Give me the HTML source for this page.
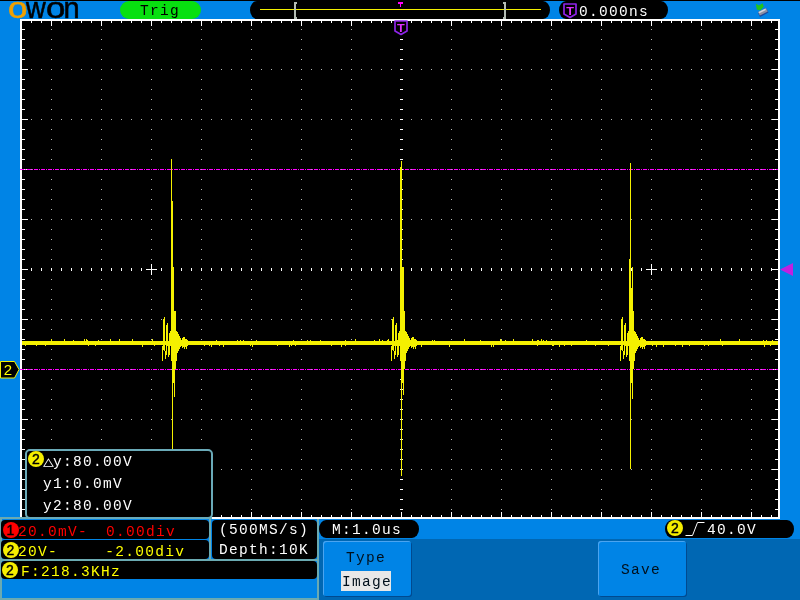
<!DOCTYPE html>
<html><head><meta charset="utf-8"><title>OWON Oscilloscope</title>
<style>
html,body{margin:0;padding:0}
body{width:800px;height:600px;overflow:hidden;position:relative;background:#0084e6;font-family:"Liberation Mono",monospace;font-size:14.5px;letter-spacing:1.30px;line-height:20px;color:#fff}
.a{position:absolute;white-space:pre}
svg{position:absolute;left:0;top:0}
.pill{position:absolute;background:#000;border-radius:7px/9px}
.blk{position:absolute;background:#000;border-radius:4px}
.ch{position:absolute;width:16px;height:16px;border-radius:50%;font-family:"Liberation Sans",sans-serif;font-size:14px;-webkit-text-stroke:0.4px #000;line-height:16px;text-align:center;color:#000;letter-spacing:0}
.btn{position:absolute;background:#0084e6;border-radius:3px;box-shadow:inset 1px 1px 0 #4aa4f0, 1px 1px 0 #004a90;color:#00101c}
.lg{display:inline-block;transform-origin:0 0;text-align:left}
.ln{position:absolute;background:#6aaab2}
</style></head><body>
<div id="scr" style="position:absolute;left:0;top:0;width:800px;height:600px;will-change:transform">
<div class="a" style="left:0;top:0;width:800px;height:1px;background:#000"></div>
<div class="a" id="logo" style="left:0;top:-8px;width:120px;height:30px;font-family:'Liberation Sans',sans-serif;font-size:29px;line-height:normal;letter-spacing:0;color:#000;-webkit-text-stroke:0.55px #000"><span class="lg" style="margin-left:7.7px;width:18.8px;transform:scaleX(1.21);color:#f0a000;-webkit-text-stroke:0.55px #f0a000">o</span><span class="lg" style="width:19.8px;transform:scaleX(0.94)">w</span><span class="lg" style="width:17.2px;transform:scaleX(1.2)">o</span><span class="lg" style="width:17px">n</span></div>
<div class="a" style="left:120px;top:1px;width:81px;height:18px;border-radius:9px;background:#08e010"></div>
<div class="a" style="left:140px;top:1px;color:#000">Trig</div>
<div class="pill" style="left:250px;top:1px;width:300px;height:18px"></div>
<div class="pill" style="left:559px;top:1px;width:109px;height:18px"></div>
<div class="a" style="left:579px;top:2px">0.000ns</div>
<div class="ln" style="left:0;top:517px;width:319px;height:2px"></div>
<div class="ln" style="left:0;top:559px;width:319px;height:2px"></div>
<div class="ln" style="left:0;top:598px;width:319px;height:2px"></div>
<div class="ln" style="left:209px;top:518px;width:2px;height:42px"></div>
<div class="ln" style="left:317px;top:518px;width:2px;height:81px"></div>
<div class="ln" style="left:0;top:518px;width:2px;height:81px"></div>
<svg width="800" height="600" viewBox="0 0 800 600" shape-rendering="crispEdges">
<rect x="20" y="19" width="760" height="500" fill="#fff" />
<rect x="22" y="21" width="756" height="496" fill="#000" />
<path d="M31 21v2M31 515v2M41 21v2M41 515v2M51 21v5M51 512v5M61 21v2M61 515v2M71 21v2M71 515v2M81 21v2M81 515v2M91 21v2M91 515v2M101 21v5M101 512v5M111 21v2M111 515v2M121 21v2M121 515v2M131 21v2M131 515v2M141 21v2M141 515v2M151 21v5M151 512v5M161 21v2M161 515v2M171 21v2M171 515v2M181 21v2M181 515v2M191 21v2M191 515v2M201 21v5M201 512v5M211 21v2M211 515v2M221 21v2M221 515v2M231 21v2M231 515v2M241 21v2M241 515v2M251 21v5M251 512v5M261 21v2M261 515v2M271 21v2M271 515v2M281 21v2M281 515v2M291 21v2M291 515v2M301 21v5M301 512v5M311 21v2M311 515v2M321 21v2M321 515v2M331 21v2M331 515v2M341 21v2M341 515v2M351 21v5M351 512v5M361 21v2M361 515v2M371 21v2M371 515v2M381 21v2M381 515v2M391 21v2M391 515v2M401 21v5M401 512v5M411 21v2M411 515v2M421 21v2M421 515v2M431 21v2M431 515v2M441 21v2M441 515v2M451 21v5M451 512v5M461 21v2M461 515v2M471 21v2M471 515v2M481 21v2M481 515v2M491 21v2M491 515v2M501 21v5M501 512v5M511 21v2M511 515v2M521 21v2M521 515v2M531 21v2M531 515v2M541 21v2M541 515v2M551 21v5M551 512v5M561 21v2M561 515v2M571 21v2M571 515v2M581 21v2M581 515v2M591 21v2M591 515v2M601 21v5M601 512v5M611 21v2M611 515v2M621 21v2M621 515v2M631 21v2M631 515v2M641 21v2M641 515v2M651 21v5M651 512v5M661 21v2M661 515v2M671 21v2M671 515v2M681 21v2M681 515v2M691 21v2M691 515v2M701 21v5M701 512v5M711 21v2M711 515v2M721 21v2M721 515v2M731 21v2M731 515v2M741 21v2M741 515v2M751 21v5M751 512v5M761 21v2M761 515v2M771 21v2M771 515v2" stroke="#fff" stroke-width="1" transform="translate(0.5,0)" fill="none"/>
<path d="M22 29h3M775 29h3M22 39h3M775 39h3M22 49h3M775 49h3M22 59h3M775 59h3M22 69h6M772 69h6M22 79h3M775 79h3M22 89h3M775 89h3M22 99h3M775 99h3M22 109h3M775 109h3M22 119h6M772 119h6M22 129h3M775 129h3M22 139h3M775 139h3M22 149h3M775 149h3M22 159h3M775 159h3M22 169h6M772 169h6M22 179h3M775 179h3M22 189h3M775 189h3M22 199h3M775 199h3M22 209h3M775 209h3M22 219h6M772 219h6M22 229h3M775 229h3M22 239h3M775 239h3M22 249h3M775 249h3M22 259h3M775 259h3M22 269h6M772 269h6M22 279h3M775 279h3M22 289h3M775 289h3M22 299h3M775 299h3M22 309h3M775 309h3M22 319h6M772 319h6M22 329h3M775 329h3M22 339h3M775 339h3M22 349h3M775 349h3M22 359h3M775 359h3M22 369h6M772 369h6M22 379h3M775 379h3M22 389h3M775 389h3M22 399h3M775 399h3M22 409h3M775 409h3M22 419h6M772 419h6M22 429h3M775 429h3M22 439h3M775 439h3M22 449h3M775 449h3M22 459h3M775 459h3M22 469h6M772 469h6M22 479h3M775 479h3M22 489h3M775 489h3M22 499h3M775 499h3M22 509h3M775 509h3" stroke="#fff" stroke-width="1" transform="translate(0,0.5)" fill="none"/>
<path d="M51 29h1M51 39h1M51 49h1M51 59h1M51 69h1M51 79h1M51 89h1M51 99h1M51 109h1M51 119h1M51 129h1M51 139h1M51 149h1M51 159h1M51 169h1M51 179h1M51 189h1M51 199h1M51 209h1M51 219h1M51 229h1M51 239h1M51 249h1M51 259h1M51 269h1M51 279h1M51 289h1M51 299h1M51 309h1M51 319h1M51 329h1M51 339h1M51 349h1M51 359h1M51 369h1M51 379h1M51 389h1M51 399h1M51 409h1M51 419h1M51 429h1M51 439h1M51 449h1M51 459h1M51 469h1M51 479h1M51 489h1M51 499h1M51 509h1M101 29h1M101 39h1M101 49h1M101 59h1M101 69h1M101 79h1M101 89h1M101 99h1M101 109h1M101 119h1M101 129h1M101 139h1M101 149h1M101 159h1M101 169h1M101 179h1M101 189h1M101 199h1M101 209h1M101 219h1M101 229h1M101 239h1M101 249h1M101 259h1M101 269h1M101 279h1M101 289h1M101 299h1M101 309h1M101 319h1M101 329h1M101 339h1M101 349h1M101 359h1M101 369h1M101 379h1M101 389h1M101 399h1M101 409h1M101 419h1M101 429h1M101 439h1M101 449h1M101 459h1M101 469h1M101 479h1M101 489h1M101 499h1M101 509h1M151 29h1M151 39h1M151 49h1M151 59h1M151 69h1M151 79h1M151 89h1M151 99h1M151 109h1M151 119h1M151 129h1M151 139h1M151 149h1M151 159h1M151 169h1M151 179h1M151 189h1M151 199h1M151 209h1M151 219h1M151 229h1M151 239h1M151 249h1M151 259h1M151 269h1M151 279h1M151 289h1M151 299h1M151 309h1M151 319h1M151 329h1M151 339h1M151 349h1M151 359h1M151 369h1M151 379h1M151 389h1M151 399h1M151 409h1M151 419h1M151 429h1M151 439h1M151 449h1M151 459h1M151 469h1M151 479h1M151 489h1M151 499h1M151 509h1M201 29h1M201 39h1M201 49h1M201 59h1M201 69h1M201 79h1M201 89h1M201 99h1M201 109h1M201 119h1M201 129h1M201 139h1M201 149h1M201 159h1M201 169h1M201 179h1M201 189h1M201 199h1M201 209h1M201 219h1M201 229h1M201 239h1M201 249h1M201 259h1M201 269h1M201 279h1M201 289h1M201 299h1M201 309h1M201 319h1M201 329h1M201 339h1M201 349h1M201 359h1M201 369h1M201 379h1M201 389h1M201 399h1M201 409h1M201 419h1M201 429h1M201 439h1M201 449h1M201 459h1M201 469h1M201 479h1M201 489h1M201 499h1M201 509h1M251 29h1M251 39h1M251 49h1M251 59h1M251 69h1M251 79h1M251 89h1M251 99h1M251 109h1M251 119h1M251 129h1M251 139h1M251 149h1M251 159h1M251 169h1M251 179h1M251 189h1M251 199h1M251 209h1M251 219h1M251 229h1M251 239h1M251 249h1M251 259h1M251 269h1M251 279h1M251 289h1M251 299h1M251 309h1M251 319h1M251 329h1M251 339h1M251 349h1M251 359h1M251 369h1M251 379h1M251 389h1M251 399h1M251 409h1M251 419h1M251 429h1M251 439h1M251 449h1M251 459h1M251 469h1M251 479h1M251 489h1M251 499h1M251 509h1M301 29h1M301 39h1M301 49h1M301 59h1M301 69h1M301 79h1M301 89h1M301 99h1M301 109h1M301 119h1M301 129h1M301 139h1M301 149h1M301 159h1M301 169h1M301 179h1M301 189h1M301 199h1M301 209h1M301 219h1M301 229h1M301 239h1M301 249h1M301 259h1M301 269h1M301 279h1M301 289h1M301 299h1M301 309h1M301 319h1M301 329h1M301 339h1M301 349h1M301 359h1M301 369h1M301 379h1M301 389h1M301 399h1M301 409h1M301 419h1M301 429h1M301 439h1M301 449h1M301 459h1M301 469h1M301 479h1M301 489h1M301 499h1M301 509h1M351 29h1M351 39h1M351 49h1M351 59h1M351 69h1M351 79h1M351 89h1M351 99h1M351 109h1M351 119h1M351 129h1M351 139h1M351 149h1M351 159h1M351 169h1M351 179h1M351 189h1M351 199h1M351 209h1M351 219h1M351 229h1M351 239h1M351 249h1M351 259h1M351 269h1M351 279h1M351 289h1M351 299h1M351 309h1M351 319h1M351 329h1M351 339h1M351 349h1M351 359h1M351 369h1M351 379h1M351 389h1M351 399h1M351 409h1M351 419h1M351 429h1M351 439h1M351 449h1M351 459h1M351 469h1M351 479h1M351 489h1M351 499h1M351 509h1M451 29h1M451 39h1M451 49h1M451 59h1M451 69h1M451 79h1M451 89h1M451 99h1M451 109h1M451 119h1M451 129h1M451 139h1M451 149h1M451 159h1M451 169h1M451 179h1M451 189h1M451 199h1M451 209h1M451 219h1M451 229h1M451 239h1M451 249h1M451 259h1M451 269h1M451 279h1M451 289h1M451 299h1M451 309h1M451 319h1M451 329h1M451 339h1M451 349h1M451 359h1M451 369h1M451 379h1M451 389h1M451 399h1M451 409h1M451 419h1M451 429h1M451 439h1M451 449h1M451 459h1M451 469h1M451 479h1M451 489h1M451 499h1M451 509h1M501 29h1M501 39h1M501 49h1M501 59h1M501 69h1M501 79h1M501 89h1M501 99h1M501 109h1M501 119h1M501 129h1M501 139h1M501 149h1M501 159h1M501 169h1M501 179h1M501 189h1M501 199h1M501 209h1M501 219h1M501 229h1M501 239h1M501 249h1M501 259h1M501 269h1M501 279h1M501 289h1M501 299h1M501 309h1M501 319h1M501 329h1M501 339h1M501 349h1M501 359h1M501 369h1M501 379h1M501 389h1M501 399h1M501 409h1M501 419h1M501 429h1M501 439h1M501 449h1M501 459h1M501 469h1M501 479h1M501 489h1M501 499h1M501 509h1M551 29h1M551 39h1M551 49h1M551 59h1M551 69h1M551 79h1M551 89h1M551 99h1M551 109h1M551 119h1M551 129h1M551 139h1M551 149h1M551 159h1M551 169h1M551 179h1M551 189h1M551 199h1M551 209h1M551 219h1M551 229h1M551 239h1M551 249h1M551 259h1M551 269h1M551 279h1M551 289h1M551 299h1M551 309h1M551 319h1M551 329h1M551 339h1M551 349h1M551 359h1M551 369h1M551 379h1M551 389h1M551 399h1M551 409h1M551 419h1M551 429h1M551 439h1M551 449h1M551 459h1M551 469h1M551 479h1M551 489h1M551 499h1M551 509h1M601 29h1M601 39h1M601 49h1M601 59h1M601 69h1M601 79h1M601 89h1M601 99h1M601 109h1M601 119h1M601 129h1M601 139h1M601 149h1M601 159h1M601 169h1M601 179h1M601 189h1M601 199h1M601 209h1M601 219h1M601 229h1M601 239h1M601 249h1M601 259h1M601 269h1M601 279h1M601 289h1M601 299h1M601 309h1M601 319h1M601 329h1M601 339h1M601 349h1M601 359h1M601 369h1M601 379h1M601 389h1M601 399h1M601 409h1M601 419h1M601 429h1M601 439h1M601 449h1M601 459h1M601 469h1M601 479h1M601 489h1M601 499h1M601 509h1M651 29h1M651 39h1M651 49h1M651 59h1M651 69h1M651 79h1M651 89h1M651 99h1M651 109h1M651 119h1M651 129h1M651 139h1M651 149h1M651 159h1M651 169h1M651 179h1M651 189h1M651 199h1M651 209h1M651 219h1M651 229h1M651 239h1M651 249h1M651 259h1M651 269h1M651 279h1M651 289h1M651 299h1M651 309h1M651 319h1M651 329h1M651 339h1M651 349h1M651 359h1M651 369h1M651 379h1M651 389h1M651 399h1M651 409h1M651 419h1M651 429h1M651 439h1M651 449h1M651 459h1M651 469h1M651 479h1M651 489h1M651 499h1M651 509h1M701 29h1M701 39h1M701 49h1M701 59h1M701 69h1M701 79h1M701 89h1M701 99h1M701 109h1M701 119h1M701 129h1M701 139h1M701 149h1M701 159h1M701 169h1M701 179h1M701 189h1M701 199h1M701 209h1M701 219h1M701 229h1M701 239h1M701 249h1M701 259h1M701 269h1M701 279h1M701 289h1M701 299h1M701 309h1M701 319h1M701 329h1M701 339h1M701 349h1M701 359h1M701 369h1M701 379h1M701 389h1M701 399h1M701 409h1M701 419h1M701 429h1M701 439h1M701 449h1M701 459h1M701 469h1M701 479h1M701 489h1M701 499h1M701 509h1M751 29h1M751 39h1M751 49h1M751 59h1M751 69h1M751 79h1M751 89h1M751 99h1M751 109h1M751 119h1M751 129h1M751 139h1M751 149h1M751 159h1M751 169h1M751 179h1M751 189h1M751 199h1M751 209h1M751 219h1M751 229h1M751 239h1M751 249h1M751 259h1M751 269h1M751 279h1M751 289h1M751 299h1M751 309h1M751 319h1M751 329h1M751 339h1M751 349h1M751 359h1M751 369h1M751 379h1M751 389h1M751 399h1M751 409h1M751 419h1M751 429h1M751 439h1M751 449h1M751 459h1M751 469h1M751 479h1M751 489h1M751 499h1M751 509h1M31 69h1M41 69h1M51 69h1M61 69h1M71 69h1M81 69h1M91 69h1M101 69h1M111 69h1M121 69h1M131 69h1M141 69h1M151 69h1M161 69h1M171 69h1M181 69h1M191 69h1M201 69h1M211 69h1M221 69h1M231 69h1M241 69h1M251 69h1M261 69h1M271 69h1M281 69h1M291 69h1M301 69h1M311 69h1M321 69h1M331 69h1M341 69h1M351 69h1M361 69h1M371 69h1M381 69h1M391 69h1M401 69h1M411 69h1M421 69h1M431 69h1M441 69h1M451 69h1M461 69h1M471 69h1M481 69h1M491 69h1M501 69h1M511 69h1M521 69h1M531 69h1M541 69h1M551 69h1M561 69h1M571 69h1M581 69h1M591 69h1M601 69h1M611 69h1M621 69h1M631 69h1M641 69h1M651 69h1M661 69h1M671 69h1M681 69h1M691 69h1M701 69h1M711 69h1M721 69h1M731 69h1M741 69h1M751 69h1M761 69h1M771 69h1M31 119h1M41 119h1M51 119h1M61 119h1M71 119h1M81 119h1M91 119h1M101 119h1M111 119h1M121 119h1M131 119h1M141 119h1M151 119h1M161 119h1M171 119h1M181 119h1M191 119h1M201 119h1M211 119h1M221 119h1M231 119h1M241 119h1M251 119h1M261 119h1M271 119h1M281 119h1M291 119h1M301 119h1M311 119h1M321 119h1M331 119h1M341 119h1M351 119h1M361 119h1M371 119h1M381 119h1M391 119h1M401 119h1M411 119h1M421 119h1M431 119h1M441 119h1M451 119h1M461 119h1M471 119h1M481 119h1M491 119h1M501 119h1M511 119h1M521 119h1M531 119h1M541 119h1M551 119h1M561 119h1M571 119h1M581 119h1M591 119h1M601 119h1M611 119h1M621 119h1M631 119h1M641 119h1M651 119h1M661 119h1M671 119h1M681 119h1M691 119h1M701 119h1M711 119h1M721 119h1M731 119h1M741 119h1M751 119h1M761 119h1M771 119h1M31 169h1M41 169h1M51 169h1M61 169h1M71 169h1M81 169h1M91 169h1M101 169h1M111 169h1M121 169h1M131 169h1M141 169h1M151 169h1M161 169h1M171 169h1M181 169h1M191 169h1M201 169h1M211 169h1M221 169h1M231 169h1M241 169h1M251 169h1M261 169h1M271 169h1M281 169h1M291 169h1M301 169h1M311 169h1M321 169h1M331 169h1M341 169h1M351 169h1M361 169h1M371 169h1M381 169h1M391 169h1M401 169h1M411 169h1M421 169h1M431 169h1M441 169h1M451 169h1M461 169h1M471 169h1M481 169h1M491 169h1M501 169h1M511 169h1M521 169h1M531 169h1M541 169h1M551 169h1M561 169h1M571 169h1M581 169h1M591 169h1M601 169h1M611 169h1M621 169h1M631 169h1M641 169h1M651 169h1M661 169h1M671 169h1M681 169h1M691 169h1M701 169h1M711 169h1M721 169h1M731 169h1M741 169h1M751 169h1M761 169h1M771 169h1M31 219h1M41 219h1M51 219h1M61 219h1M71 219h1M81 219h1M91 219h1M101 219h1M111 219h1M121 219h1M131 219h1M141 219h1M151 219h1M161 219h1M171 219h1M181 219h1M191 219h1M201 219h1M211 219h1M221 219h1M231 219h1M241 219h1M251 219h1M261 219h1M271 219h1M281 219h1M291 219h1M301 219h1M311 219h1M321 219h1M331 219h1M341 219h1M351 219h1M361 219h1M371 219h1M381 219h1M391 219h1M401 219h1M411 219h1M421 219h1M431 219h1M441 219h1M451 219h1M461 219h1M471 219h1M481 219h1M491 219h1M501 219h1M511 219h1M521 219h1M531 219h1M541 219h1M551 219h1M561 219h1M571 219h1M581 219h1M591 219h1M601 219h1M611 219h1M621 219h1M631 219h1M641 219h1M651 219h1M661 219h1M671 219h1M681 219h1M691 219h1M701 219h1M711 219h1M721 219h1M731 219h1M741 219h1M751 219h1M761 219h1M771 219h1M31 319h1M41 319h1M51 319h1M61 319h1M71 319h1M81 319h1M91 319h1M101 319h1M111 319h1M121 319h1M131 319h1M141 319h1M151 319h1M161 319h1M171 319h1M181 319h1M191 319h1M201 319h1M211 319h1M221 319h1M231 319h1M241 319h1M251 319h1M261 319h1M271 319h1M281 319h1M291 319h1M301 319h1M311 319h1M321 319h1M331 319h1M341 319h1M351 319h1M361 319h1M371 319h1M381 319h1M391 319h1M401 319h1M411 319h1M421 319h1M431 319h1M441 319h1M451 319h1M461 319h1M471 319h1M481 319h1M491 319h1M501 319h1M511 319h1M521 319h1M531 319h1M541 319h1M551 319h1M561 319h1M571 319h1M581 319h1M591 319h1M601 319h1M611 319h1M621 319h1M631 319h1M641 319h1M651 319h1M661 319h1M671 319h1M681 319h1M691 319h1M701 319h1M711 319h1M721 319h1M731 319h1M741 319h1M751 319h1M761 319h1M771 319h1M31 369h1M41 369h1M51 369h1M61 369h1M71 369h1M81 369h1M91 369h1M101 369h1M111 369h1M121 369h1M131 369h1M141 369h1M151 369h1M161 369h1M171 369h1M181 369h1M191 369h1M201 369h1M211 369h1M221 369h1M231 369h1M241 369h1M251 369h1M261 369h1M271 369h1M281 369h1M291 369h1M301 369h1M311 369h1M321 369h1M331 369h1M341 369h1M351 369h1M361 369h1M371 369h1M381 369h1M391 369h1M401 369h1M411 369h1M421 369h1M431 369h1M441 369h1M451 369h1M461 369h1M471 369h1M481 369h1M491 369h1M501 369h1M511 369h1M521 369h1M531 369h1M541 369h1M551 369h1M561 369h1M571 369h1M581 369h1M591 369h1M601 369h1M611 369h1M621 369h1M631 369h1M641 369h1M651 369h1M661 369h1M671 369h1M681 369h1M691 369h1M701 369h1M711 369h1M721 369h1M731 369h1M741 369h1M751 369h1M761 369h1M771 369h1M31 419h1M41 419h1M51 419h1M61 419h1M71 419h1M81 419h1M91 419h1M101 419h1M111 419h1M121 419h1M131 419h1M141 419h1M151 419h1M161 419h1M171 419h1M181 419h1M191 419h1M201 419h1M211 419h1M221 419h1M231 419h1M241 419h1M251 419h1M261 419h1M271 419h1M281 419h1M291 419h1M301 419h1M311 419h1M321 419h1M331 419h1M341 419h1M351 419h1M361 419h1M371 419h1M381 419h1M391 419h1M401 419h1M411 419h1M421 419h1M431 419h1M441 419h1M451 419h1M461 419h1M471 419h1M481 419h1M491 419h1M501 419h1M511 419h1M521 419h1M531 419h1M541 419h1M551 419h1M561 419h1M571 419h1M581 419h1M591 419h1M601 419h1M611 419h1M621 419h1M631 419h1M641 419h1M651 419h1M661 419h1M671 419h1M681 419h1M691 419h1M701 419h1M711 419h1M721 419h1M731 419h1M741 419h1M751 419h1M761 419h1M771 419h1M31 469h1M41 469h1M51 469h1M61 469h1M71 469h1M81 469h1M91 469h1M101 469h1M111 469h1M121 469h1M131 469h1M141 469h1M151 469h1M161 469h1M171 469h1M181 469h1M191 469h1M201 469h1M211 469h1M221 469h1M231 469h1M241 469h1M251 469h1M261 469h1M271 469h1M281 469h1M291 469h1M301 469h1M311 469h1M321 469h1M331 469h1M341 469h1M351 469h1M361 469h1M371 469h1M381 469h1M391 469h1M401 469h1M411 469h1M421 469h1M431 469h1M441 469h1M451 469h1M461 469h1M471 469h1M481 469h1M491 469h1M501 469h1M511 469h1M521 469h1M531 469h1M541 469h1M551 469h1M561 469h1M571 469h1M581 469h1M591 469h1M601 469h1M611 469h1M621 469h1M631 469h1M641 469h1M651 469h1M661 469h1M671 469h1M681 469h1M691 469h1M701 469h1M711 469h1M721 469h1M731 469h1M741 469h1M751 469h1M761 469h1M771 469h1" stroke="#b4b8b4" stroke-width="1" transform="translate(0,0.5)" fill="none"/>
<path d="M400 29h3M400 39h3M400 49h3M400 59h3M400 69h3M400 79h3M400 89h3M400 99h3M400 109h3M400 119h3M400 129h3M400 139h3M400 149h3M400 159h3M400 169h3M400 179h3M400 189h3M400 199h3M400 209h3M400 219h3M400 229h3M400 239h3M400 249h3M400 259h3M400 269h3M400 279h3M400 289h3M400 299h3M400 309h3M400 319h3M400 329h3M400 339h3M400 349h3M400 359h3M400 369h3M400 379h3M400 389h3M400 399h3M400 409h3M400 419h3M400 429h3M400 439h3M400 449h3M400 459h3M400 469h3M400 479h3M400 489h3M400 499h3M400 509h3" stroke="#fff" stroke-width="1" transform="translate(0,0.5)" fill="none"/>
<path d="M31 268v3M41 268v3M51 268v3M61 268v3M71 268v3M81 268v3M91 268v3M101 268v3M111 268v3M121 268v3M131 268v3M141 268v3M151 268v3M161 268v3M171 268v3M181 268v3M191 268v3M201 268v3M211 268v3M221 268v3M231 268v3M241 268v3M251 268v3M261 268v3M271 268v3M281 268v3M291 268v3M301 268v3M311 268v3M321 268v3M331 268v3M341 268v3M351 268v3M361 268v3M371 268v3M381 268v3M391 268v3M401 268v3M411 268v3M421 268v3M431 268v3M441 268v3M451 268v3M461 268v3M471 268v3M481 268v3M491 268v3M501 268v3M511 268v3M521 268v3M531 268v3M541 268v3M551 268v3M561 268v3M571 268v3M581 268v3M591 268v3M601 268v3M611 268v3M621 268v3M631 268v3M641 268v3M651 268v3M661 268v3M671 268v3M681 268v3M691 268v3M701 268v3M711 268v3M721 268v3M731 268v3M741 268v3M751 268v3M761 268v3M771 268v3" stroke="#fff" stroke-width="1" transform="translate(0.5,0)" fill="none"/>
<rect x="146" y="269" width="11" height="1" fill="#fff" />
<rect x="151" y="264" width="1" height="11" fill="#fff" />
<rect x="646" y="269" width="11" height="1" fill="#fff" />
<rect x="651" y="264" width="1" height="11" fill="#fff" />
<path d="M20 169.5H778" stroke="#ff00ff" stroke-width="1" stroke-dasharray="4 1 1 1" fill="none"/>
<path d="M20 369.5H778" stroke="#ff00ff" stroke-width="1" stroke-dasharray="4 1 1 1" fill="none"/>
<path d="M22 341h756V345h-756zM171 159h1V201h-1zM171 201h2V267h-2zM171 267h3V311h-3zM162 346h1V361h-1zM163 319h1V350h-1zM164 317h1V351h-1zM165 351h1V359h-1zM166 325h1V355h-1zM167 323h1V346h-1zM168 345h1V357h-1zM169 333h1V355h-1zM170 331h1V346h-1zM176 331h1V361h-1zM177 332h1V353h-1zM178 334h1V351h-1zM179 336h1V349h-1zM180 338h1V347h-1zM181 340h1V346h-1zM182 338h1V348h-1zM183 337h1V347h-1zM184 337h1V349h-1zM185 339h1V347h-1zM186 339h1V349h-1zM187 340h1V346h-1zM171 311h5V361h-5zM172 361h4V369h-4zM172 369h3V383h-3zM172 383h1V449h-1zM174 383h1V397h-1zM401 161h1V167h-1zM400 167h2V267h-2zM400 267h4V312h-4zM391 346h1V361h-1zM392 319h1V350h-1zM393 317h1V351h-1zM394 351h1V359h-1zM395 325h1V355h-1zM396 323h1V346h-1zM397 345h1V357h-1zM398 333h1V355h-1zM399 331h1V346h-1zM405 331h1V361h-1zM406 332h1V353h-1zM407 334h1V351h-1zM408 336h1V349h-1zM409 338h1V347h-1zM410 340h1V346h-1zM411 338h1V348h-1zM412 337h1V347h-1zM413 337h1V349h-1zM414 339h1V347h-1zM415 339h1V349h-1zM416 340h1V346h-1zM400 311h5V361h-5zM401 361h4V369h-4zM401 369h3V383h-3zM401 383h1V476h-1zM403 383h1V395h-1zM630 163h1V259h-1zM629 259h2V288h-2zM632 267h1V288h-1zM629 288h4V313h-4zM620 346h1V361h-1zM621 319h1V350h-1zM622 317h1V351h-1zM623 351h1V359h-1zM624 325h1V355h-1zM625 323h1V346h-1zM626 345h1V357h-1zM627 333h1V355h-1zM628 331h1V346h-1zM634 331h1V361h-1zM635 332h1V353h-1zM636 334h1V351h-1zM637 336h1V349h-1zM638 338h1V347h-1zM639 340h1V346h-1zM640 338h1V348h-1zM641 337h1V347h-1zM642 337h1V349h-1zM643 339h1V347h-1zM644 339h1V349h-1zM645 340h1V346h-1zM629 311h5V361h-5zM630 361h4V369h-4zM630 369h3V383h-3zM630 383h1V469h-1zM632 383h1V399h-1zM355 339h1V341h-1zM73 340h1V341h-1zM398 345h1V346h-1zM243 340h1V341h-1zM95 345h1V346h-1zM84 339h1V341h-1zM252 345h1V347h-1zM87 340h1V341h-1zM250 345h1V346h-1zM320 340h1V341h-1zM608 345h1V346h-1zM209 345h1V346h-1zM216 340h1V341h-1zM88 345h1V346h-1zM532 339h1V341h-1zM345 345h1V346h-1zM394 345h1V346h-1zM739 339h1V341h-1zM331 345h1V346h-1zM770 345h1V346h-1zM98 340h1V341h-1zM374 340h1V341h-1zM64 339h1V341h-1zM595 345h1V346h-1zM345 340h1V341h-1zM532 340h1V341h-1zM119 339h1V341h-1zM704 345h1V346h-1zM341 345h1V347h-1zM480 340h1V341h-1zM708 345h1V346h-1zM387 340h1V341h-1zM84 340h1V341h-1zM277 345h1V346h-1zM532 340h1V341h-1zM586 340h1V341h-1zM464 339h1V341h-1zM449 345h1V347h-1zM413 339h1V341h-1zM204 345h1V346h-1zM36 345h1V346h-1zM293 340h1V341h-1zM571 345h1V346h-1zM152 339h1V341h-1zM656 345h1V347h-1zM491 345h1V347h-1zM720 339h1V341h-1zM432 340h1V341h-1zM434 340h1V341h-1zM237 340h1V341h-1zM639 340h1V341h-1zM178 345h1V346h-1zM652 345h1V346h-1zM652 345h1V346h-1zM379 339h1V341h-1zM142 345h1V347h-1zM501 340h1V341h-1zM171 340h1V341h-1zM295 345h1V346h-1zM552 345h1V346h-1zM564 345h1V346h-1zM51 339h1V341h-1zM682 345h1V347h-1zM291 345h1V346h-1zM388 339h1V341h-1zM538 340h1V341h-1zM223 345h1V347h-1zM256 340h1V341h-1zM772 340h1V341h-1zM310 340h1V341h-1zM643 339h1V341h-1zM764 345h1V347h-1zM397 340h1V341h-1zM505 340h1V341h-1zM663 345h1V347h-1zM25 345h1V346h-1zM682 345h1V346h-1zM421 345h1V347h-1zM513 339h1V341h-1zM675 345h1V346h-1zM763 340h1V341h-1zM110 339h1V341h-1zM154 345h1V346h-1zM500 339h1V341h-1zM634 345h1V347h-1zM382 340h1V341h-1zM45 345h1V346h-1zM689 345h1V346h-1zM166 345h1V346h-1zM240 340h1V341h-1zM537 345h1V346h-1zM289 345h1V346h-1zM86 339h1V341h-1zM493 345h1V347h-1zM553 345h1V346h-1zM537 340h1V341h-1zM546 340h1V341h-1zM211 345h1V347h-1zM177 340h1V341h-1zM766 340h1V341h-1zM722 345h1V346h-1zM132 339h1V341h-1zM219 345h1V346h-1zM543 340h1V341h-1zM88 345h1V346h-1zM541 339h1V341h-1zM307 340h1V341h-1zM513 340h1V341h-1zM559 345h1V347h-1zM289 345h1V347h-1z" fill="#f4f000"/>
<rect x="260" y="9" width="281" height="1" fill="#f4f000" />
<path d="M294 2h3v2h-1v13h1v2h-3z" fill="#b4bcb4"/>
<path d="M506 2h-3v2h1v13h-1v2h3z" fill="#b4bcb4"/>
<rect x="398" y="2" width="5" height="2" fill="#ff00ff" />
<rect x="400" y="4" width="1" height="3" fill="#ff00ff" />
<path d="M395 21h12v10l-6 3.5l-6 -3.5z" fill="#000" stroke="#8e24e8" stroke-width="1.7" stroke-linejoin="round" shape-rendering="auto"/>
<text x="401" y="32" text-anchor="middle" font-family="Liberation Sans, sans-serif" font-size="11" font-weight="bold" fill="#e030ff" style="letter-spacing:0" transform="translate(401 0) scale(1.15 1) translate(-401 0)">T</text>
<path d="M564 4h12v10l-6 3.5l-6 -3.5z" fill="#000" stroke="#8e24e8" stroke-width="1.7" stroke-linejoin="round" shape-rendering="auto"/>
<text x="570" y="15" text-anchor="middle" font-family="Liberation Sans, sans-serif" font-size="11" font-weight="bold" fill="#e030ff" style="letter-spacing:0" transform="translate(570 0) scale(1.15 1) translate(-570 0)">T</text>
<path d="M780 269.5L793 263v13z" fill="#c020e0" shape-rendering="auto"/>
<path d="M0.5 361.5h14l4.5 8l-4.5 8.5h-14z" fill="#000" stroke="#f4f000" stroke-width="1" shape-rendering="auto"/>
</svg>
<div class="ln" style="left:0;top:517px;width:212px;height:2px"></div>
<div class="a" style="left:1px;top:361px;width:14px;height:18px;line-height:18px;text-align:center;font-family:'Liberation Sans',sans-serif;font-size:15px;letter-spacing:0;color:#ff0">2</div>
<div class="blk" style="left:1px;top:519.5px;width:208px;height:19.5px"></div>
<div class="blk" style="left:1px;top:540px;width:208px;height:19px"></div>
<div class="blk" style="left:1px;top:561px;width:316px;height:18px"></div>
<div class="blk" style="left:211.5px;top:519.5px;width:105.5px;height:39.5px"></div>
<div class="ch" style="left:2.5px;top:522px;background:#f00">1</div>
<div class="ch" style="left:2.5px;top:542px;background:#f6ee00">2</div>
<div class="ch" style="left:2px;top:561.5px;background:#f6ee00">2</div>
<div class="a" style="left:18px;top:522px;color:#f00">20.0mV-  <span style="margin-left:-2px">0.00div</span></div>
<div class="a" style="left:18px;top:542px;color:#ff0">20V-     <span style="margin-left:-2.75px">-2.00div</span></div>
<div class="a" style="left:21px;top:562px;color:#ff0">F:218.3KHz</div>
<div class="a" style="left:219px;top:520px">(500MS/s)</div>
<div class="a" style="left:219px;top:540px">Depth:10K</div>
<div class="a" style="left:319px;top:539px;width:481px;height:61px;background:#0067b3"></div>
<div class="pill" style="left:319px;top:519.5px;width:100px;height:18.5px"></div>
<div class="a" style="left:332px;top:520px">M:1.0us</div>
<div class="pill" style="left:664.5px;top:519.5px;width:129.5px;height:18.5px"></div>
<div class="ch" style="left:667px;top:520px;background:#f6ee00">2</div>
<div class="a" style="left:707px;top:520px">40.0V</div>
<div class="btn" style="left:323px;top:541px;width:88px;height:55px"></div>
<div class="a" style="left:341px;top:571px;width:50px;height:20px;background:#e8e8e8"></div>
<div class="a" style="left:346px;top:548px;color:#00101c">Type</div>
<div class="a" style="left:342px;top:572px;color:#00101c">Image</div>
<div class="btn" style="left:598px;top:541px;width:88px;height:55px"></div>
<div class="a" style="left:621px;top:560px;color:#00101c">Save</div>
<div class="a" style="left:25px;top:449px;width:184px;height:66px;border:2px solid #6aaab8;border-radius:5px;background:#000"></div>
<div class="ch" style="left:28px;top:451px;background:#f6ee00">2</div>
<div class="a" style="left:43px;top:451px;line-height:22px"><span style="display:inline-block;transform:scaleX(1.25);transform-origin:0 50%">△</span>y:80.00V
y1:0.0mV
y2:80.00V</div>
<svg width="800" height="600" viewBox="0 0 800 600">
<path d="M685.5 535.5h7l5 -13h7" fill="none" stroke="#fff" stroke-width="1" shape-rendering="auto"/>
<g shape-rendering="auto"><path d="M758 13l8.5 -4.5l2 4l-8.5 4.5z" fill="#1c4a9c"/><path d="M755.8 3.8l3.2 1.8l3.6 -2.4l1.2 3.4l-3.4 3.8l-3.6 -0.8z" fill="#22c41c"/><path d="M758 12l8 -4l1.8 3.6l-8 4z" fill="#8a90a4"/><path d="M759 12.6l6.6 -3.2" stroke="#d4d6e0" stroke-width="1.6"/></g>
</svg>
</div>
</body></html>
